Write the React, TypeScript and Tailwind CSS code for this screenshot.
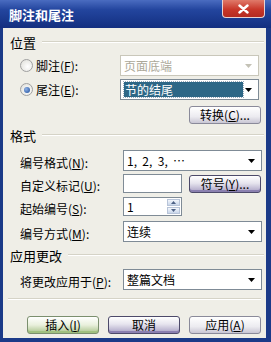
import type { ReactNode } from 'react'

const cjk = { fontFamily: '"SimSun", "Noto Sans CJK SC", "Liberation Sans", sans-serif' }

function Arrow({ disabled }: { disabled?: boolean }) {
  return (
    <svg width="7" height="4" viewBox="0 0 7 4" className="shrink-0 mr-[1px]">
      <path d="M0 0 H7 L3.5 4 Z" fill={disabled ? '#c4c2b6' : '#000'} />
    </svg>
  )
}

function Heading({ text, className }: { text: string; className?: string }) {
  return (
    <div className={`flex items-center h-[14px] ${className ?? ''}`}>
      <span className="text-[13px] leading-none text-black pl-[7px] pr-[6px]">{text}</span>
      <div className="flex-1 flex flex-col mr-[2px]">
        <div className="h-px bg-[#d5d3c7]" />
        <div className="h-px bg-white" />
      </div>
    </div>
  )
}

function Combo({ children, disabled, className }: { children: ReactNode; disabled?: boolean; className?: string }) {
  return (
    <div
      className={`w-[139px] flex items-center bg-white border pl-[3px] pr-[5px] ${
        disabled ? 'border-[#c9c7ba] text-[#aca899]' : 'border-[#7f8b96] text-black'
      } ${className ?? ''}`}
    >
      <div className="flex-1 flex items-center h-full">{children}</div>
      <Arrow disabled={disabled} />
    </div>
  )
}

function XpButton({ children, tone = 'plain', className }: { children: ReactNode; tone?: 'plain' | 'default' | 'green'; className?: string }) {
  const tones = {
    plain: 'border-[#8a8a9a] bg-[linear-gradient(#ffffff,#ecebf0_60%,#c9c6d4)]',
    default: 'border-[#4d4a6a] bg-[linear-gradient(#ffffff,#e6e4ee_45%,#a9a1c4)] shadow-[inset_0_-2px_0_#8b80b0]',
    green: 'border-[#7b8f6e] bg-[linear-gradient(#ffffff,#e9f0dc_50%,#aac48c)] shadow-[inset_0_-2px_0_#a0c080]',
  }
  return (
    <div className={`w-[72px] h-[18px] rounded-[3px] border flex items-center justify-center text-[12px] leading-none text-black ${tones[tone]} ${className ?? ''}`}>
      {children}
    </div>
  )
}

function Radio({ checked }: { checked?: boolean }) {
  return (
    <div className="w-[13px] h-[13px] rounded-full border border-[#a0a0a0] bg-[radial-gradient(circle_at_60%_60%,#ffffff,#dcdcd6)] flex items-center justify-center">
      {checked && <div className="w-[6px] h-[6px] rounded-full bg-[radial-gradient(circle_at_35%_35%,#8fb2e6,#1c4c9a)]" />}
    </div>
  )
}

function Label({ text, mn }: { text: string; mn: string }) {
  return (
    <span className="text-[12px] leading-none text-black">
      {text}(<u>{mn}</u>):
    </span>
  )
}

export default function App() {
  return (
    <div className="w-[271px] h-[342px] flex flex-col bg-[#1b3a88]" style={cjk}>
      {/* title bar */}
      <div className="h-[28px] flex items-start bg-[linear-gradient(#4a6cc0,#23459e_35%,#132f80)] relative">
        <span className="pl-[9px] pt-[8px] text-[13px] leading-none font-bold text-white">脚注和尾注</span>
        <div className="absolute left-[222px] top-0 w-[43px] h-[18px] rounded-b-[4px] border border-t-0 border-[#e8d2d2] bg-[linear-gradient(#e07a6a,#c8372a_55%,#b52a20)] flex items-center justify-center">
          <svg width="11" height="10" viewBox="0 0 11 10">
            <path d="M1.5 1.5 L9.5 8.5 M9.5 1.5 L1.5 8.5" stroke="#fff" strokeWidth="2.4" strokeLinecap="round" />
          </svg>
        </div>
      </div>

      {/* body */}
      <div className="flex-1 ml-[3px] mr-[5px] mb-[4px] bg-[#efeee7] flex flex-col">
        <Heading text="位置" className="mt-[7px]" />

        <div className="flex items-center h-[21px] mt-[6px]">
          <div className="w-[117px] pl-[17px] flex items-center gap-[3px]">
            <Radio />
            <Label text="脚注" mn="F" />
          </div>
          <Combo disabled className="h-[21px]">
            <span className="text-[12px] leading-none">页面底端</span>
          </Combo>
        </div>

        <div className="flex items-center h-[21px] mt-[3px]">
          <div className="w-[117px] pl-[17px] flex items-center gap-[3px]">
            <Radio checked />
            <Label text="尾注" mn="E" />
          </div>
          <Combo className="h-[21px]">
            <div className="h-[15px] w-[119px] bg-[#2d6786] flex items-center pl-[1px] outline outline-1 outline-dotted outline-[#9ab]">
              <span className="text-[12px] leading-none text-white">节的结尾</span>
            </div>
          </Combo>
        </div>

        <div className="flex mt-[6px] pl-[186px]">
          <XpButton>转换(<u>C</u>)...</XpButton>
        </div>

        <Heading text="格式" className="mt-[4px]" />

        <div className="flex items-center h-[21px] mt-[8px]">
          <div className="w-[120px] pl-[17px]"><Label text="编号格式" mn="N" /></div>
          <Combo className="h-[21px]">
            <span className="text-[12px] leading-none whitespace-pre">1,  2,  3,  …</span>
          </Combo>
        </div>

        <div className="flex items-center h-[19px] mt-[3px]">
          <div className="w-[120px] pl-[17px]"><Label text="自定义标记" mn="U" /></div>
          <div className="w-[59px] h-[19px] bg-white border border-[#7f8b96]" />
          <XpButton className="ml-[7px]" tone="default">符号(<u>Y</u>)...</XpButton>
        </div>

        <div className="flex items-center h-[19px] mt-[4px]">
          <div className="w-[120px] pl-[17px]"><Label text="起始编号" mn="S" /></div>
          <div className="w-[59px] h-[19px] bg-white border border-[#7f8b96] flex items-center">
            <span className="flex-1 pl-[3px] text-[12px] leading-none">1</span>
            <div className="w-[15px] h-full flex flex-col gap-px p-px">
              <div className="flex-1 bg-[linear-gradient(#f4f7fc,#c9d6ea)] border border-[#b8c4d8] flex items-center justify-center">
                <svg width="5" height="3" viewBox="0 0 5 3"><path d="M0 3 H5 L2.5 0 Z" fill="#4d6185" /></svg>
              </div>
              <div className="flex-1 bg-[linear-gradient(#f4f7fc,#c9d6ea)] border border-[#b8c4d8] flex items-center justify-center">
                <svg width="5" height="3" viewBox="0 0 5 3"><path d="M0 0 H5 L2.5 3 Z" fill="#4d6185" /></svg>
              </div>
            </div>
          </div>
        </div>

        <div className="flex items-center h-[21px] mt-[5px]">
          <div className="w-[120px] pl-[17px]"><Label text="编号方式" mn="M" /></div>
          <Combo className="h-[21px]">
            <span className="text-[12px] leading-none">连续</span>
          </Combo>
        </div>

        <Heading text="应用更改" className="mt-[6px]" />

        <div className="flex items-center h-[21px] mt-[7px]">
          <div className="w-[120px] pl-[17px]"><Label text="将更改应用于" mn="P" /></div>
          <Combo className="h-[21px]">
            <span className="text-[12px] leading-none">整篇文档</span>
          </Combo>
        </div>

        <div className="mt-[8px] mx-[5px] flex flex-col">
          <div className="h-px bg-[#d5d3c7]" />
          <div className="h-px bg-white" />
        </div>

        <div className="flex mt-[16px] pl-[24px] gap-[9px]">
          <XpButton tone="green">插入(<u>I</u>)</XpButton>
          <XpButton tone="default">取消</XpButton>
          <XpButton>应用(<u>A</u>)</XpButton>
        </div>
      </div>
    </div>
  )
}
